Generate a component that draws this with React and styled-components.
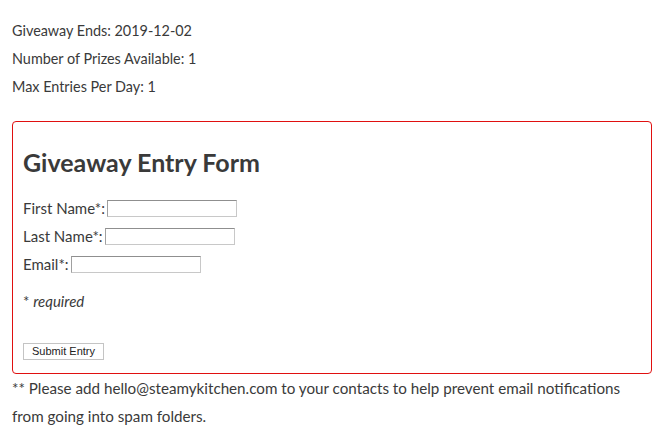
import React from 'react';
import styled, { createGlobalStyle } from 'styled-components';

const GlobalStyle = createGlobalStyle`
  body {
    margin: 0;
    background: #fff;
    font-family: Lato, "Noto Sans", sans-serif;
    color: #3a3a3a;
  }
`;

const Page = styled.div`
  padding: 17px 15px 0 12px;
  font-size: 15px;
  line-height: 28px;
`;

const Info = styled.p`
  margin: 0;
  font-size: 14.4px;
`;

const FormBox = styled.form`
  margin-top: 20px;
  border: 1px solid #e01010;
  border-radius: 4px;
  padding: 18px 10px 13px;
`;

const Title = styled.h2`
  margin: 0 0 10px;
  font-size: 25px;
  line-height: 44px;
  font-weight: 700;
`;

const Field = styled.div`
  display: flex;
  align-items: center;
  height: 28px;
`;

const Label = styled.label`
  margin-right: 2px;
`;

const Input = styled.input`
  width: 130px;
  height: 17px;
  box-sizing: border-box;
  border: 1px solid #c8c8c8;
  border-top-color: #8f8f8f;
  border-left-color: #a0a0a0;
  padding: 0 2px;
  margin: 0;
`;

const Required = styled.p`
  margin: 9px 0 28px;
  em {
    font-style: italic;
  }
`;

const Button = styled.button`
  font-family: "Liberation Sans", Arial, sans-serif;
  font-size: 11px;
  color: #222;
  background: #fff;
  border: 1px solid #c4c4c4;
  padding: 1px 8px;
  height: 17px;
  line-height: 13px;
  display: block;
`;

const Note = styled.p`
  margin: 0;
  font-size: 15.2px;
`;

export default function App() {
  return (
    <>
      <GlobalStyle />
      <Page>
        <Info>Giveaway Ends: 2019-12-02</Info>
        <Info>Number of Prizes Available: 1</Info>
        <Info>Max Entries Per Day: 1</Info>
        <FormBox onSubmit={(e) => e.preventDefault()}>
          <Title>Giveaway Entry Form</Title>
          <Field>
            <Label>First Name*:</Label>
            <Input type="text" />
          </Field>
          <Field>
            <Label>Last Name*:</Label>
            <Input type="text" />
          </Field>
          <Field>
            <Label>Email*:</Label>
            <Input type="text" />
          </Field>
          <Required>
            * <em>required</em>
          </Required>
          <Button type="submit">Submit Entry</Button>
        </FormBox>
        <Note>
          ** Please add hello@steamykitchen.com to your contacts to help prevent email
          notifications from going into spam folders.
        </Note>
      </Page>
    </>
  );
}
